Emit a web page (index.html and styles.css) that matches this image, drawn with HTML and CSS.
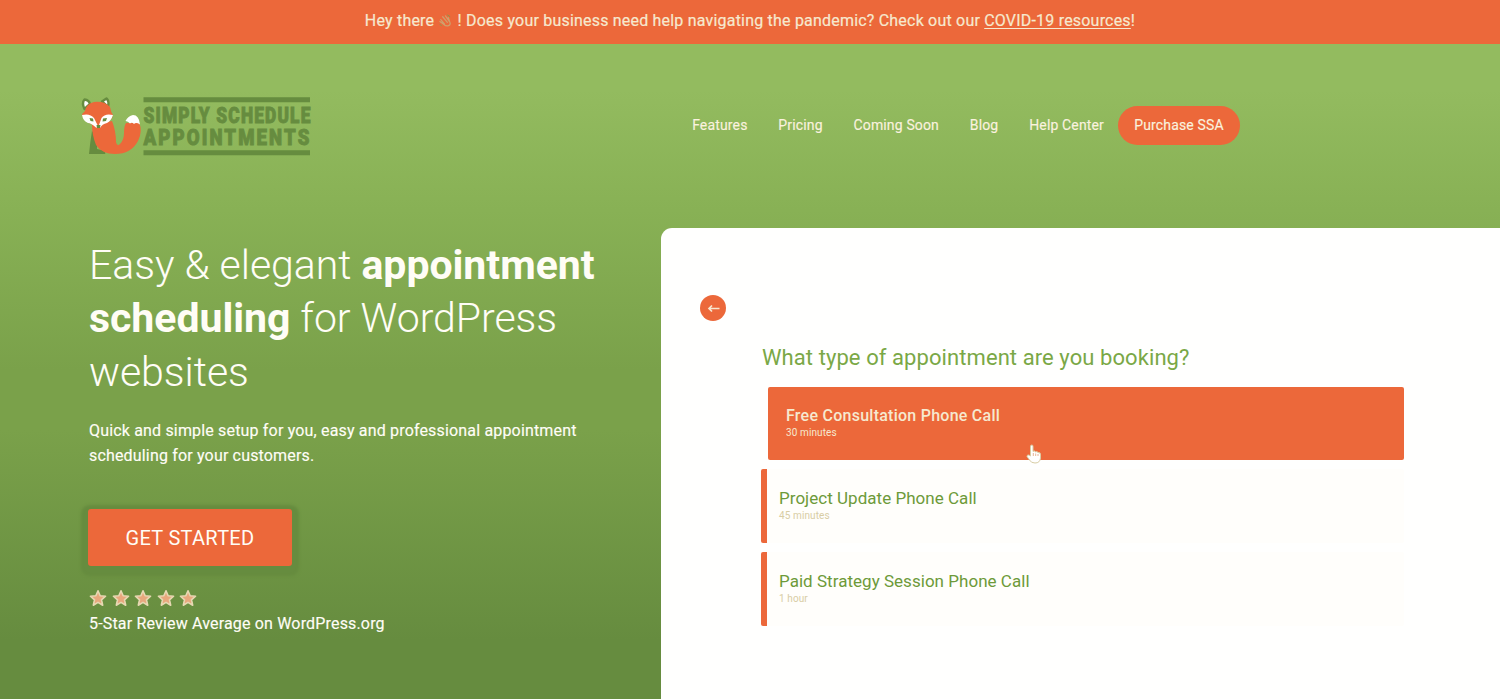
FILE: index.html
```html
<!DOCTYPE html>
<html lang="en">
<head>
<meta charset="utf-8">
<title>Simply Schedule Appointments</title>
<link rel="stylesheet" href="styles.css">
</head>
<body>
<div class="banner"><p class="banner-text">Hey there <svg class="wave" viewBox="0 0 16 16"><path d="M3 7l4 5M5 4l5 6M8 3l4 6M11 5l2 6c0 3-4 4-7 1L2 9" fill="none" stroke="#cfa06c" stroke-width="1.3" stroke-linecap="round"/><path d="M10 2l3 2M2 12l2 2" stroke="#7aa14a" stroke-width="1"/></svg> ! Does your business need help navigating the pandemic? Check out our <a class="banner-link" href="#">COVID-19 resources</a>!</p></div>
<header class="header">
  <a class="logo" href="#" aria-label="Simply Schedule Appointments">
    <svg class="logo-art" viewBox="0 0 230 62" width="230" height="62">
      <path d="M10 34Q16 38 15 52L22 53.500Q24 56 23 57H7Q8 46 10 34Z" fill="#668c3f"/>
      <path d="M10 28L30 24Q34 34 34 45Q35 50 38 47Q42 43 42 36Q42 29 44 26L57 25.500Q61 34 56 44Q49 57 33 57Q20 57 14 48Q10 38 10 28Z" fill="#ec683a"/>
      <path d="M43.500 24Q46 19 51 18Q57 18 58 27.500Q54 25 52 27Q50 25 48 26.500Q46 24 43.500 24Z" fill="#fff"/>
      <path d="M2.500 12Q-.5 6 2.500 2.500Q7 3 8 7ZM20 4.500L24.500 1.500Q27.500 4 26 10Z" fill="#fff" stroke="#668c3f" stroke-width="2.400" stroke-linejoin="round"/>
      <path d="M3 14Q4 7 12 5Q23 4 28 10Q29 15 31 18Q30 24 22 27L18 31H14L9 27Q1 24 0 17Z" fill="#ec683a"/>
      <path d="M0 18Q8 16 12 21L15.500 28L14.500 31Q9 26 6 26Q1 24 0 18ZM31 18Q23 16 19.500 21L17 28L18 31Q20 27 25 26Q29 24 31 18Z" fill="#fff"/>
      <path d="M7.500 21L11 21.500L11.500 24.500L8.500 24ZM25 21L21 21.500L20.500 24.500L24 24ZM14.500 28H18.500L18 31H15Z" fill="#668c3f"/>
      <path d="M61.500 .2H228V5.200H61.500ZM61.500 53.200H228V58.200H61.500Z" fill="#668c3f"/>
      <text class="logo-type" x="61.500" y="26" textLength="168" lengthAdjust="spacingAndGlyphs">SIMPLY SCHEDULE</text>
      <text class="logo-type logo-type-wide" x="61.500" y="48" textLength="168" lengthAdjust="spacingAndGlyphs">APPOINTMENTS</text>
    </svg>
  </a>
  <nav class="nav">
    <a href="#">Features</a><a href="#">Pricing</a><a href="#">Coming Soon</a><a href="#">Blog</a><a href="#">Help Center</a><a class="purchase" href="#">Purchase SSA</a>
  </nav>
</header>
<main class="hero">
  <section class="intro">
    <h1 class="title">Easy &amp; elegant <b>appointment</b><br><b>scheduling</b> for WordPress<br>websites</h1>
    <p class="lead">Quick and simple setup for you, easy and professional appointment<br>scheduling for your customers.</p>
    <a class="cta" href="#">GET STARTED</a>
    <div class="stars">
      <svg viewBox="0 0 20 20"><path d="M10 2l2.400 5.500 6 .5-4.500 4 1.300 6L10 14.900 4.800 18l1.300-6L1.600 8l6-.5z"/></svg>
      <svg viewBox="0 0 20 20"><path d="M10 2l2.400 5.500 6 .5-4.500 4 1.300 6L10 14.900 4.800 18l1.300-6L1.600 8l6-.5z"/></svg>
      <svg viewBox="0 0 20 20"><path d="M10 2l2.400 5.500 6 .5-4.500 4 1.300 6L10 14.900 4.800 18l1.300-6L1.600 8l6-.5z"/></svg>
      <svg viewBox="0 0 20 20"><path d="M10 2l2.400 5.500 6 .5-4.500 4 1.300 6L10 14.900 4.800 18l1.300-6L1.600 8l6-.5z"/></svg>
      <svg viewBox="0 0 20 20"><path d="M10 2l2.400 5.500 6 .5-4.500 4 1.300 6L10 14.900 4.800 18l1.300-6L1.600 8l6-.5z"/></svg>
    </div>
    <p class="rating">5-Star Review Average on WordPress.org</p>
  </section>
  <section class="booking">
    <button class="back" aria-label="Back"><svg viewBox="0 0 26 26" width="26" height="26"><path d="M19.500 13.500H9M12 10.500l-3 3L12 16.500" fill="none" stroke="#f7e6cf" stroke-width="1.700"/></svg></button>
    <div class="picker">
      <h2 class="question">What type of appointment are you booking?</h2>
      <div class="option selected"><span class="name">Free Consultation Phone Call</span><span class="time">30 minutes</span>
        <svg class="pointer" viewBox="0 0 16 20" width="16" height="20"><path d="M4.500 12V2.500Q4.500 1 5.800 1T7 2.500V7.500Q8.500 6 9.500 8Q11 6.800 12 8.600Q14.500 8 14.500 10.500V14Q14 19 9 19Q5 19 3.500 16L1 12.500Q1 10.500 3 11Z" fill="#fff" stroke="#d8cda4" stroke-width="1"/><path d="M7.300 9v3M9.700 9.500v2.500M12 10v2" stroke="#e0a17b" stroke-width=".8"/></svg>
      </div>
      <div class="option"><span class="name">Project Update Phone Call</span><span class="time">45 minutes</span></div>
      <div class="option"><span class="name">Paid Strategy Session Phone Call</span><span class="time">1 hour</span></div>
    </div>
  </section>
</main>
</body>
</html>
```

FILE: styles.css
```css
* { box-sizing: border-box; }
body {
  margin: 0;
  height: 699px;
  overflow: hidden;
  display: flex;
  flex-direction: column;
  font-family: Roboto, "Liberation Sans", sans-serif;
  color: #fffdf6;
  background: linear-gradient(#93bb5f 0, #93bb5f 90px, #88b155 210px, #7aa14a 370px, #7aa14a 430px, #668c3f 640px, #668c3f);
}
a { color: inherit; text-decoration: none; }
h1, h2, p { margin: 0; }
.banner {
  height: 44px;
  flex: none;
  padding-top: 10px;
  text-align: center;
  background: #ec683a;
  color: #f6e9cf;
}
.banner-text { font-size: 16px; line-height: 21px; white-space: nowrap; letter-spacing: .2px; -webkit-text-stroke: .2px; }
.banner-link { text-decoration: underline; text-underline-offset: 2px; text-decoration-thickness: 1px; }
.wave { width: 15px; height: 15px; margin: 0; vertical-align: -2px; }
.header {
  flex: none;
  height: 184px;
  padding: 53px 260px 0 82px;
  display: flex;
  justify-content: space-between;
  align-items: flex-start;
}
.logo-art { display: block; overflow: visible; }
.logo-type { font: 900 22px/22px Roboto, sans-serif; letter-spacing: 1.500px; fill: #668c3f; stroke: #668c3f; stroke-width: .9px; }
.logo-type-wide { letter-spacing: 2.500px; }
.nav {
  display: flex;
  align-items: center;
  gap: 30.800px;
  padding-top: 9px;
  font-size: 14px;
  letter-spacing: .15px;
  color: #faf2df;
  white-space: nowrap;
  -webkit-text-stroke: .15px;
}
.nav .purchase {
  width: 122px;
  height: 39px;
  margin-left: -16.800px;
  border-radius: 20px;
  background: #ec683a;
  line-height: 39px;
  text-align: center;
}
.nav a { line-height: 39px; }
.hero { flex: 1; display: grid; grid-template-columns: 661px 1fr; }
.intro { padding: 11px 0 0 89px; white-space: nowrap; }
.title { font-size: 41px; line-height: 53.300px; font-weight: 300; letter-spacing: -.03px; }
.title b { font-weight: 700; }
.lead { margin-top: 19px; font-size: 16px; line-height: 25px; letter-spacing: .17px; -webkit-text-stroke: .15px; }
.cta {
  display: block;
  width: 204px;
  height: 57px;
  margin: 41px 0 0 -1px;
  border-radius: 3px;
  background: #ec683a;
  box-shadow: 0 3px 3px 7px #668c3f;
  font-size: 20px;
  letter-spacing: .28px;
  line-height: 58px;
  text-align: center;
}
.stars { display: flex; gap: 4.600px; margin: 23px 0 0; }
.stars svg { width: 18px; height: 18px; fill: #e8a87d; stroke: #e6d8b2; stroke-width: 1.800; stroke-linejoin: round; }
.rating { margin-top: 6px; font-size: 16px; line-height: 21px; letter-spacing: .17px; -webkit-text-stroke: .15px; }
.booking { padding: 67px 0 0 39px; border-radius: 11px 0 0; background: #fffffe; }
.back {
  display: block;
  width: 26px;
  height: 26px;
  padding: 0;
  border: 0;
  border-radius: 50%;
  background: #ec683a;
}
.picker { margin: 23px 0 0 61px; width: 643px; display: flex; flex-direction: column; }
.question { font-size: 22px; line-height: 28px; letter-spacing: .08px; font-weight: 400; color: #7aa846; padding-left: 1px; }
.option {
  position: relative;
  height: 74px;
  margin-top: 9px;
  padding: 18px 0 0 12px;
  display: flex;
  flex-direction: column;
  border-left: 6px solid #ec683a;
  border-radius: 2px;
  background: #fffefb;
  color: #6d9a39;
}
.name { font-size: 17px; line-height: 22px; letter-spacing: .03px; }
.time { font-size: 10px; line-height: 13px; letter-spacing: .1px; color: #d8cda4; }
.selected { margin: 15px 0 0 7px; height: 73px; padding-left: 12px; background: #ec683a; color: #f6e9cf; }
.selected .name { font-size: 16px; font-weight: 500; letter-spacing: .25px; }
.selected .time { margin-top: -1px; color: #f6e9cf; }
.pointer { position: absolute; left: 252px; top: 57px; }
```
